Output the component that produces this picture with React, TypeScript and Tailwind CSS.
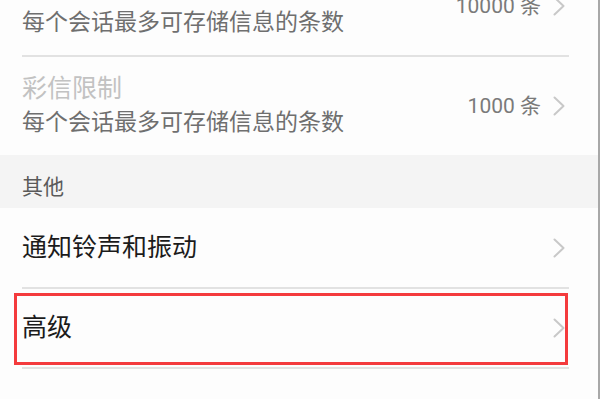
const font = { fontFamily: 'Roboto, "Noto Sans CJK SC", sans-serif' };

function Chevron() {
  return (
    <svg width="12" height="20" viewBox="0 0 12 20" fill="none" className="shrink-0">
      <polyline points="1.5,1.5 10.5,10 1.5,18.5" stroke="#c8c8c8" strokeWidth="2" strokeLinecap="round" strokeLinejoin="round" />
    </svg>
  );
}

function LimitRow({ title, value, first }: { title: string; value: string; first?: boolean }) {
  return (
    <div
      className={`ml-[22px] mr-[29px] flex items-center justify-between pr-[4px] ${
        first ? "-mt-[43px] h-[100px] border-b-2 border-[#e2e2e2]" : "h-[98px]"
      }`}
    >
      <div className="flex flex-col">
        <span className="text-[25px] leading-[34px] text-[#c2c2c2]">{title}</span>
        <span className="text-[23px] leading-[34px] text-[#6f6f6f]">每个会话最多可存储信息的条数</span>
      </div>
      <div className="flex items-center gap-[12px]">
        <span className="text-[21px] leading-[28px] text-[#7a7a7a]">{value}</span>
        <Chevron />
      </div>
    </div>
  );
}

function NavRow({ label, height }: { label: string; height: string }) {
  return (
    <div className={`ml-[22px] mr-[29px] flex items-center justify-between border-b-2 border-[#e2e2e2] pr-[4px] ${height}`}>
      <span className="text-[25px] leading-[34px] text-[#1b1b1b]">{label}</span>
      <Chevron />
    </div>
  );
}

export default function App() {
  return (
    <div className="h-[399px] w-full overflow-hidden border-r-2 border-[#a8a8a8] bg-[#fdfdfd]" style={font}>
      <LimitRow first title="短信限制" value="10000 条" />
      <LimitRow title="彩信限制" value="1000 条" />
      <div className="h-[53px] bg-[#f4f4f4] pl-[22px] pt-[20px]">
        <span className="text-[21px] leading-[25px] text-[#5a5a5a]">其他</span>
      </div>
      <NavRow label="通知铃声和振动" height="h-[81px]" />
      <div className="relative">
        <NavRow label="高级" height="h-[80px]" />
        <div className="pointer-events-none absolute left-[14px] top-[4px] h-[72px] w-[554px] border-[3px] border-[#f43b3d]" />
      </div>
    </div>
  );
}
